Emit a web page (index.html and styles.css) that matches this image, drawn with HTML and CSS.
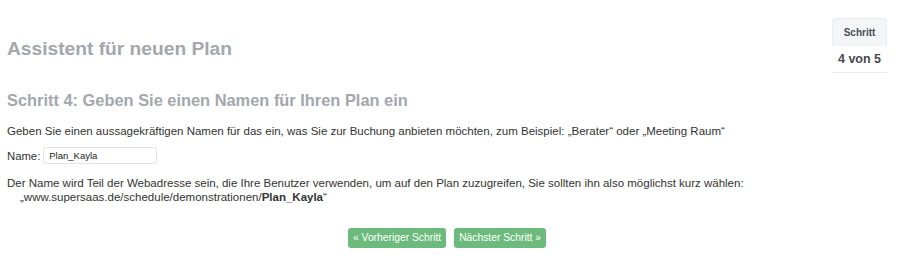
FILE: index.html
```html
<!DOCTYPE html>
<html lang="de">
<head>
<meta charset="utf-8">
<title>Assistent für neuen Plan</title>
<link rel="stylesheet" href="styles.css">
</head>
<body>
<div class="page">
  <div class="steps">
    <div class="steps-head">Schritt</div>
    <div class="steps-body">4 von 5</div>
  </div>
  <h1 class="title">Assistent für neuen Plan</h1>
  <h2 class="subtitle">Schritt 4: Geben Sie einen Namen für Ihren Plan ein</h2>
  <p class="text">Geben Sie einen aussagekräftigen Namen für das ein, was Sie zur Buchung anbieten möchten, zum Beispiel: „Berater“ oder „Meeting Raum“</p>
  <div class="name-row">
    <label class="name-label" for="name">Name:</label>
    <input class="name-input" id="name" type="text" value="Plan_Kayla">
  </div>
  <p class="text note">Der Name wird Teil der Webadresse sein, die Ihre Benutzer verwenden, um auf den Plan zuzugreifen, Sie sollten ihn also möglichst kurz wählen:<span class="url">„www.supersaas.de/schedule/demonstrationen/<b>Plan_Kayla</b>“</span></p>
  <div class="actions">
    <button class="btn" type="button">« Vorheriger Schritt</button>
    <button class="btn" type="button">Nächster Schritt »</button>
  </div>
</div>
</body>
</html>
```

FILE: styles.css
```css
html, body {
  margin: 0;
  padding: 0;
  background: #ffffff;
}
body {
  font-family: "Liberation Sans", Arial, Helvetica, sans-serif;
  color: #333333;
}
.page {
  padding: 18px 13px 0 7px;
}
.steps {
  float: right;
  width: 55px;
  text-align: center;
  font-weight: bold;
}
.steps-head {
  height: 27px;
  line-height: 27px;
  background: #f3f5f8;
  border: 1px solid #e9ecf0;
  border-bottom: none;
  border-radius: 4px 4px 0 0;
  font-size: 10px;
  color: #4a4d52;
}
.steps-body {
  height: 26px;
  line-height: 26px;
  border-bottom: 1px solid #e8eaed;
  font-size: 12.5px;
  color: #47494d;
}
.title {
  margin: 20px 0 0;
  font-size: 19.2px;
  line-height: 22px;
  font-weight: bold;
  color: #a4a7ad;
}
.subtitle {
  margin: 30px 0 0;
  font-size: 16.4px;
  line-height: 20px;
  font-weight: bold;
  color: #a4a7ad;
}
.text {
  margin: 14px 0 0;
  font-size: 11.5px;
  line-height: 14px;
}
.name-row {
  display: flex;
  align-items: center;
  gap: 3px;
  margin-top: 9px;
  font-size: 11.3px;
}
.name-input {
  box-sizing: border-box;
  width: 114px;
  height: 17px;
  margin: 0;
  padding: 0 5px;
  border: 1px solid #e2e4e8;
  border-radius: 3px;
  font-family: "Liberation Sans", Arial, sans-serif;
  font-size: 9.5px;
  color: #222222;
  outline: none;
}
.note {
  margin-top: 12px;
}
.url {
  display: block;
  padding-left: 13px;
}
.url b {
  font-weight: bold;
}
.actions {
  display: flex;
  justify-content: center;
  gap: 8px;
  margin-top: 24px;
}
.btn {
  height: 20px;
  padding: 0 5px;
  border: none;
  border-radius: 3px;
  background: #6cbb7c;
  color: #ffffff;
  font-family: "Liberation Sans", Arial, sans-serif;
  font-size: 10.3px;
  line-height: 20px;
  cursor: pointer;
}
```
